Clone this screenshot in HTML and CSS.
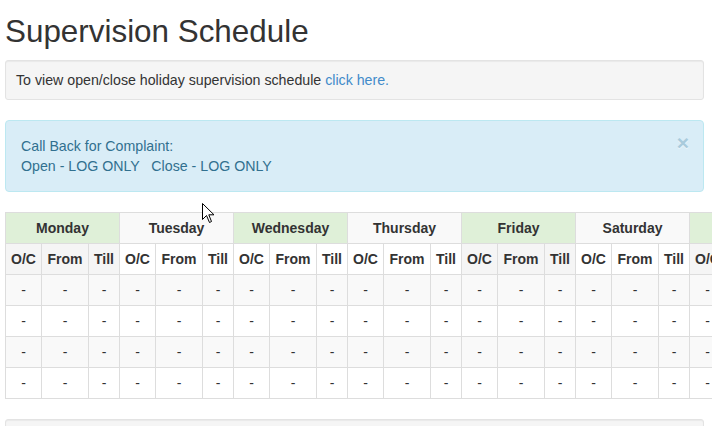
FILE: index.html
```html
<!DOCTYPE html>
<html>
<head>
<meta charset="utf-8">
<link rel="stylesheet" href="styles.css">
</head>
<body>
<div class="page">
  <h1 class="title">Supervision Schedule</h1>
  <div class="well">To view open/close holiday supervision schedule <a class="link" href="#">click here.</a></div>
  <div class="alert">
    <span class="close">&times;</span>
    <div class="line">Call Back for Complaint:</div>
    <div class="line">Open - LOG ONLY &nbsp;&nbsp;Close - LOG ONLY</div>
  </div>
  <table class="sched">
    <colgroup>
      <col class="c-oc"><col class="c-from"><col class="c-till">
      <col class="c-oc"><col class="c-from"><col class="c-till">
      <col class="c-oc"><col class="c-from"><col class="c-till">
      <col class="c-oc"><col class="c-from"><col class="c-till">
      <col class="c-oc"><col class="c-from"><col class="c-till">
      <col class="c-oc"><col class="c-from"><col class="c-till">
      <col class="c-oc"><col class="c-from"><col class="c-till">
    </colgroup>
    <tbody>
      <tr class="odd">
        <th colspan="3" class="green">Monday</th>
        <th colspan="3">Tuesday</th>
        <th colspan="3" class="green">Wednesday</th>
        <th colspan="3">Thursday</th>
        <th colspan="3" class="green">Friday</th>
        <th colspan="3">Saturday</th>
        <th colspan="3" class="green">Sunday</th>
      </tr>
      <tr>
        <th class="active">O/C</th><th class="active">From</th><th class="active">Till</th>
        <th>O/C</th><th>From</th><th>Till</th>
        <th>O/C</th><th>From</th><th>Till</th>
        <th>O/C</th><th>From</th><th>Till</th>
        <th class="active">O/C</th><th class="active">From</th><th class="active">Till</th>
        <th>O/C</th><th>From</th><th>Till</th>
        <th class="active">O/C</th><th class="active">From</th><th class="active">Till</th>
      </tr>
      <tr class="odd"><td>-</td><td>-</td><td>-</td><td>-</td><td>-</td><td>-</td><td>-</td><td>-</td><td>-</td><td>-</td><td>-</td><td>-</td><td>-</td><td>-</td><td>-</td><td>-</td><td>-</td><td>-</td><td>-</td><td>-</td><td>-</td></tr>
      <tr><td>-</td><td>-</td><td>-</td><td>-</td><td>-</td><td>-</td><td>-</td><td>-</td><td>-</td><td>-</td><td>-</td><td>-</td><td>-</td><td>-</td><td>-</td><td>-</td><td>-</td><td>-</td><td>-</td><td>-</td><td>-</td></tr>
      <tr class="odd"><td>-</td><td>-</td><td>-</td><td>-</td><td>-</td><td>-</td><td>-</td><td>-</td><td>-</td><td>-</td><td>-</td><td>-</td><td>-</td><td>-</td><td>-</td><td>-</td><td>-</td><td>-</td><td>-</td><td>-</td><td>-</td></tr>
      <tr><td>-</td><td>-</td><td>-</td><td>-</td><td>-</td><td>-</td><td>-</td><td>-</td><td>-</td><td>-</td><td>-</td><td>-</td><td>-</td><td>-</td><td>-</td><td>-</td><td>-</td><td>-</td><td>-</td><td>-</td><td>-</td></tr>
    </tbody>
  </table>
  <div class="well well-empty"></div>
</div>
<svg class="cursor" width="13" height="21" viewBox="0 0 13 21">
  <path d="M0.5 0.5 L0.5 16.5 L4.5 12.5 L7.5 19.5 L9.5 18.5 L6.8 11.8 L12 11.8 Z" fill="#fff" stroke="#000" stroke-width="1" stroke-linejoin="miter"/>
</svg>
</body>
</html>
```

FILE: styles.css
```css
html, body {
  margin: 0;
  padding: 0;
  overflow: hidden;
  background: #fff;
}
body {
  font-family: "Liberation Sans", Arial, sans-serif;
  font-size: 14px;
  line-height: 20px;
  color: #333;
}
.page {
  width: 699px;
  padding: 0 0 0 5px;
}
.title {
  font-size: 31.4px;
  font-weight: normal;
  line-height: 34px;
  margin: 15px 0 11px 0;
  color: #333;
}
.well {
  background: #f5f5f5;
  border: 1px solid #e3e3e3;
  border-radius: 3px;
  padding: 9px 9px 9px 10px;
  box-shadow: inset 0 1px 1px rgba(0,0,0,.05);
  margin-bottom: 20px;
  font-size: 14.2px;
}
.well-empty {
  height: 20px;
}
.link {
  color: #428bca;
  text-decoration: none;
}
.alert {
  position: relative;
  background: #d9edf7;
  border: 1px solid #bce8f1;
  border-radius: 4px;
  color: #31708f;
  padding: 15px 35px 15px 15px;
  margin-bottom: 20px;
  font-size: 14.2px;
}
.close {
  position: absolute;
  right: 14px;
  top: 11px;
  font-size: 21px;
  font-weight: bold;
  line-height: 21px;
  color: #a9cbdc;
  text-shadow: 0 1px 0 rgba(255,255,255,.5);
}
.sched {
  border-collapse: collapse;
  table-layout: fixed;
  width: 799px;
  border: 1px solid #ddd;
  margin-bottom: 20px;
}
.c-oc { width: 36px; }
.c-from { width: 47px; }
.c-till { width: 31px; }
.sched th, .sched td {
  border: 1px solid #ddd;
  padding: 5px;
  line-height: 20px;
  text-align: center;
  background: #fff;
  white-space: nowrap;
  overflow: hidden;
}
.sched th {
  font-weight: bold;
}
.sched tr.odd th, .sched tr.odd td {
  background: #f9f9f9;
}
.sched th.green, .sched tr.odd th.green {
  background: #dff0d8;
}
.sched th.active {
  background: #f5f5f5;
}
.cursor {
  position: absolute;
  left: 202px;
  top: 203px;
}
```
